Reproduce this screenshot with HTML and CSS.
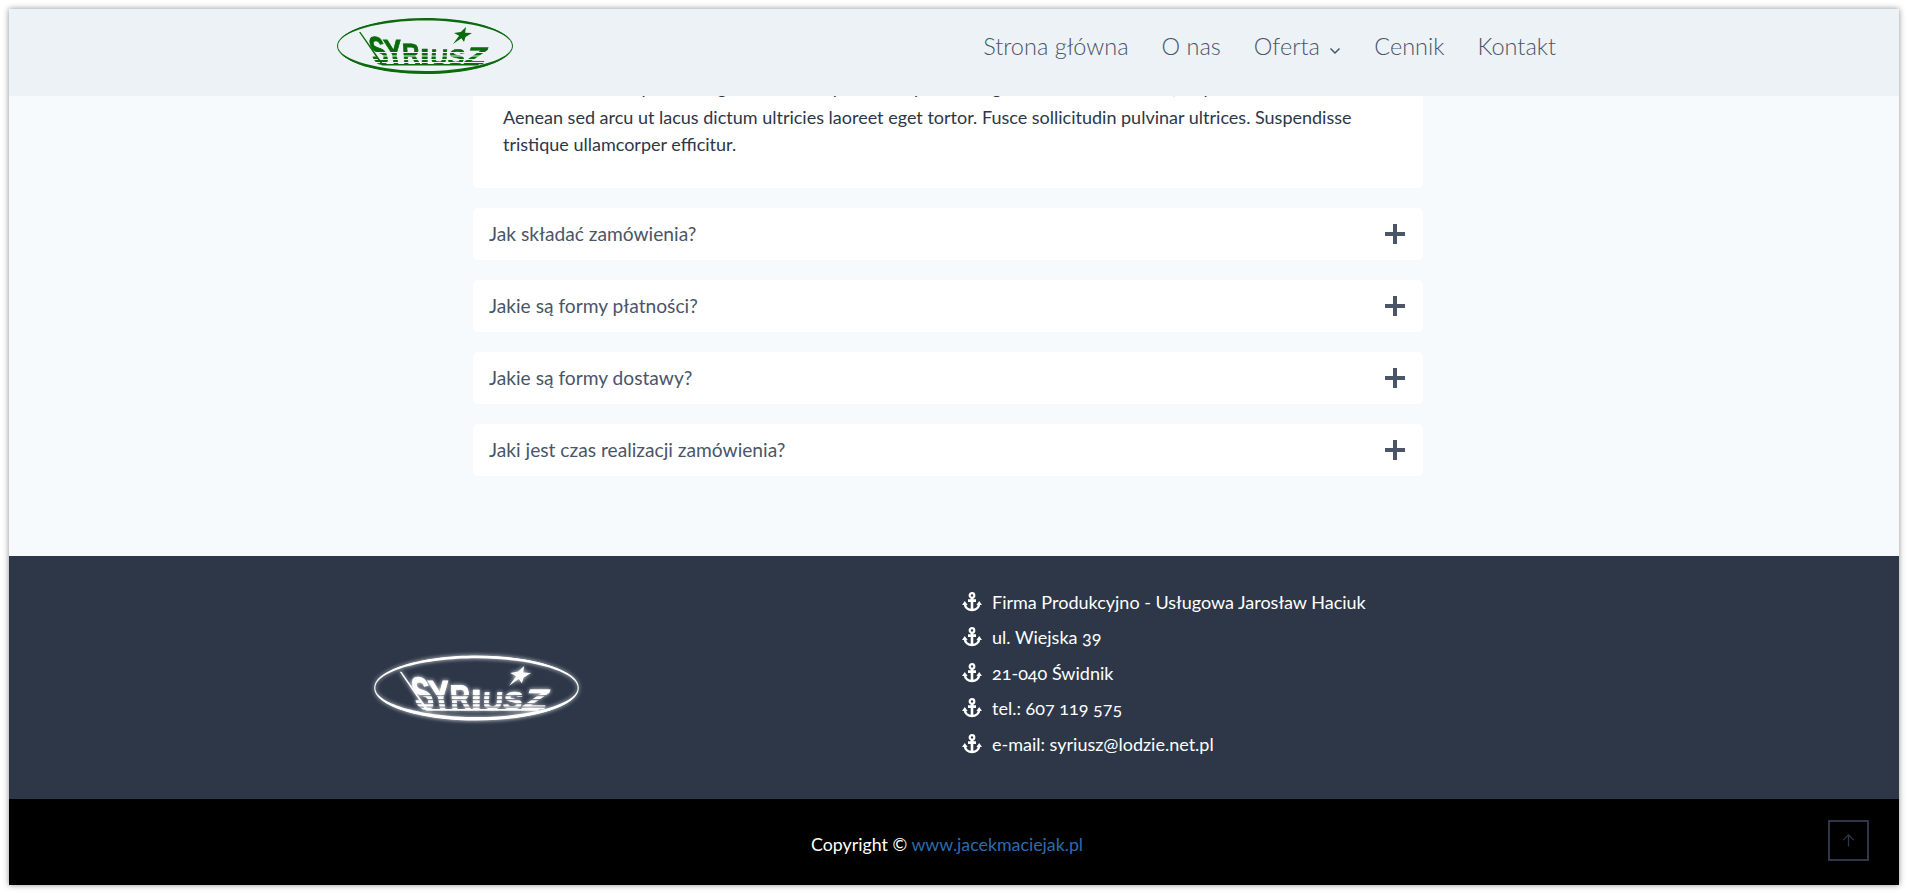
FILE: index.html
```html
<!DOCTYPE html>
<html lang="pl">
<head>
  <meta charset="UTF-8">
  <title>Syriusz</title>
  <link rel="stylesheet" href="styles.css">
</head>
<body>

  <svg class="defs">
    <symbol id="anchor" viewBox="0 0 20 20">
      <circle cx="10" cy="3.400" r="2.300" fill="none" stroke="currentColor" stroke-width="2.200"/>
      <path d="M10 5.500V18.500M6 8.600H14M2.800 11.500C3 15.800 6.400 18 10 18C13.600 18 17 15.800 17.200 11.500" fill="none" stroke="currentColor" stroke-width="2.600"/>
      <path d="M0 13L2.800 9L5.600 13ZM14.400 13L17.200 9L20 13Z" fill="currentColor"/>
    </symbol>
  </svg>

  <div class="window">
    <header class="header">
      <div class="header-inner">
        <svg class="logo" viewBox="0 0 178 58">
          <mask id="stripes-green" maskUnits="userSpaceOnUse" x="0" y="0" width="178" height="58">
            <rect width="178" height="58" fill="#fff"/>
            <path d="M20 35.500H160M20 39H160M20 42.500H160M20 45.500H160" stroke="#000" stroke-width="1"/>
          </mask>
          <ellipse cx="89" cy="29" rx="87.500" ry="27" fill="none" stroke="currentColor" stroke-width="1"/>
          <path d="M2 29C2 12 45 1 89 1C133 1 176 12 176 29C176 14 133 3.400 89 3.400C45 3.400 2 14 2 29Z" fill="currentColor"/>
          <path d="M2 29C2 46 45 57 89 57C133 57 176 46 176 29C176 43 133 54 89 54C45 54 2 43 2 29Z" fill="currentColor"/>
          <path d="M130 10L129.100 15.700L136 16L129.500 19.900L128 25L125.400 21.300L117 27L123.100 18.800L118 16L124.800 14.900Z" fill="currentColor"/>
          <path d="M23 15L46 48.500H142L143 47H47L24.500 15Z" fill="currentColor"/>
          <g class="logo-text" mask="url(#stripes-green)">
            <text transform="translate(38 47) skewX(15) scale(1.200 1.950)">S</text>
            <text transform="translate(51 47) skewX(10) scale(1.350 1.750)">Y</text>
            <text transform="translate(67 47) skewX(4) scale(1.200 1.470)">R</text>
            <text transform="translate(84 47) scale(1.700 1.150)">I</text>
            <text transform="translate(94 47) skewX(-4) scale(1.200 1.050)">U</text>
            <text transform="translate(111 47) skewX(-10) scale(1.250 1.050)">S</text>
            <text transform="translate(127 47) skewX(-20) scale(1.700 1.200)">Z</text>
          </g>
        </svg>
        <nav class="nav">
          <a href="#">Strona główna</a>
          <a href="#">O nas</a>
          <a href="#">Oferta
            <svg class="chevron" viewBox="0 0 12 8"><path d="M1.500 1.500L6 6L10.500 1.500" fill="none" stroke="currentColor" stroke-width="1.500"/></svg>
          </a>
          <a href="#">Cennik</a>
          <a href="#">Kontakt</a>
        </nav>
      </div>
    </header>

    <main class="faq">
      <div class="answer">
        <p><span class="under-header">Vestibulum dolor pretium eget massa nec purus semper eros eget nulla sit tellus enim, ac purus dolor sit.</span>
        Aenean sed arcu ut lacus dictum ultricies laoreet eget tortor. Fusce sollicitudin pulvinar ultrices. Suspendisse tristique ullamcorper efficitur.</p>
      </div>
      <div class="question"><span>Jak składać zamówienia?</span><i class="plus"></i></div>
      <div class="question"><span>Jakie są formy płatności?</span><i class="plus"></i></div>
      <div class="question"><span>Jakie są formy dostawy?</span><i class="plus"></i></div>
      <div class="question"><span>Jaki jest czas realizacji zamówienia?</span><i class="plus"></i></div>
    </main>

    <footer class="footer">
      <div class="footer-logo">
        <svg class="logo-white" viewBox="0 0 178 58">
          <mask id="stripes-white" maskUnits="userSpaceOnUse" x="0" y="0" width="178" height="58">
            <rect width="178" height="58" fill="#fff"/>
            <path d="M20 35.500H160M20 39H160M20 42.500H160M20 45.500H160" stroke="#000" stroke-width="1"/>
          </mask>
          <ellipse cx="89" cy="29" rx="87.500" ry="27" fill="none" stroke="currentColor" stroke-width="1"/>
          <path d="M2 29C2 12 45 1 89 1C133 1 176 12 176 29C176 14 133 3.400 89 3.400C45 3.400 2 14 2 29Z" fill="currentColor"/>
          <path d="M2 29C2 46 45 57 89 57C133 57 176 46 176 29C176 43 133 54 89 54C45 54 2 43 2 29Z" fill="currentColor"/>
          <path d="M130 10L129.100 15.700L136 16L129.500 19.900L128 25L125.400 21.300L117 27L123.100 18.800L118 16L124.800 14.900Z" fill="currentColor"/>
          <path d="M23 15L46 48.500H142L143 47H47L24.500 15Z" fill="currentColor"/>
          <g class="logo-text" mask="url(#stripes-white)">
            <text transform="translate(38 47) skewX(15) scale(1.200 1.950)">S</text>
            <text transform="translate(51 47) skewX(10) scale(1.350 1.750)">Y</text>
            <text transform="translate(67 47) skewX(4) scale(1.200 1.470)">R</text>
            <text transform="translate(84 47) scale(1.700 1.150)">I</text>
            <text transform="translate(94 47) skewX(-4) scale(1.200 1.050)">U</text>
            <text transform="translate(111 47) skewX(-10) scale(1.250 1.050)">S</text>
            <text transform="translate(127 47) skewX(-20) scale(1.700 1.200)">Z</text>
          </g>
        </svg>
      </div>
      <ul class="contact">
        <li><svg class="anchor"><use href="#anchor"/></svg>Firma Produkcyjno - Usługowa Jarosław Haciuk</li>
        <li><svg class="anchor"><use href="#anchor"/></svg>ul. Wiejska 39</li>
        <li><svg class="anchor"><use href="#anchor"/></svg>21-040 Świdnik</li>
        <li><svg class="anchor"><use href="#anchor"/></svg>tel.: 607 119 575</li>
        <li><svg class="anchor"><use href="#anchor"/></svg>e-mail: syriusz@lodzie.net.pl</li>
      </ul>
    </footer>

    <div class="copyright">
      <p>Copyright © <a href="#">www.jacekmaciejak.pl</a></p>
      <a class="to-top" href="#">
        <svg viewBox="0 0 16 16"><path d="M8 15.500V1M1.500 7.500L8 1L14.500 7.500" fill="none" stroke="currentColor" stroke-width="1.500"/></svg>
      </a>
    </div>
  </div>

</body>
</html>
```

FILE: styles.css
```css
* {
  box-sizing: border-box;
}

body {
  margin: 0;
  padding: 9px 9px 8px;
  background-color: #fff;
  font-family: Lato, "Open Sans", sans-serif;
  font-variant-numeric: oldstyle-nums;
}

.defs {
  display: none;
}

.window {
  position: relative;
  height: 876px;
  overflow: hidden;
  background-color: #f7fafc;
  box-shadow: 0 0 6px rgba(0,0,0,0.45);
}

.header {
  position: absolute;
  top: 0;
  left: 0;
  right: 0;
  z-index: 1;
  height: 87px;
  background-color: #edf2f7;
}

.header-inner {
  display: flex;
  align-items: center;
  justify-content: space-between;
  width: 1220px;
  height: 68px;
  margin-top: 3px;
  margin-left: 327px;
}

.logo {
  width: 178px;
  height: 58px;
  color: #0b6b0b;
}

.logo-text {
  font-family: "Liberation Sans", sans-serif;
  font-size: 20px;
  font-weight: 700;
  fill: currentColor;
  stroke: currentColor;
  stroke-width: 0.5px;
}

.nav {
  display: flex;
  gap: 33px;
}

.nav a {
  color: #4a5568;
  font-size: 23.500px;
  font-weight: 300;
  text-decoration: none;
}

.chevron {
  width: 12px;
  height: 8px;
  margin-left: 3px;
}

.faq {
  width: 950px;
  height: 547px;
  margin-left: 464px;
  padding-top: 48px;
}

.answer {
  height: 131px;
  margin-bottom: 20px;
  padding: 17px 30px 0;
  background-color: #fff;
  border-radius: 6px;
}

.answer p {
  margin: 0;
  color: #2d3748;
  font-size: 18px;
  line-height: 27px;
}

.under-header {
  display: block;
  margin-bottom: 3px;
  white-space: nowrap;
}

.question {
  display: flex;
  align-items: center;
  justify-content: space-between;
  height: 52px;
  margin-bottom: 20px;
  padding: 0 18px 2px 16px;
  background-color: #fff;
  border-radius: 6px;
  color: #4a5568;
  font-size: 19.200px;
}

.plus {
  position: relative;
  width: 20px;
  height: 20px;
  margin-top: 2px;
}

.plus::before,
.plus::after {
  content: "";
  position: absolute;
  background-color: #4a5568;
}

.plus::before {
  left: 0;
  top: 8px;
  width: 20px;
  height: 4px;
}

.plus::after {
  left: 8px;
  top: 0;
  width: 4px;
  height: 20px;
}

.footer {
  display: flex;
  height: 243px;
  background-color: #2d3748;
  color: #fff;
}

.footer-logo {
  display: flex;
  align-items: center;
  width: 953px;
  padding-top: 20px;
  padding-left: 364px;
}

.logo-white {
  width: 207px;
  height: 68px;
  color: #fff;
  filter: drop-shadow(0 0 2px rgba(255,255,255,0.9));
}

.contact {
  margin: 0;
  padding: 28px 0 0;
  list-style: none;
  font-size: 18px;
}

.contact li {
  display: flex;
  align-items: center;
  height: 35.500px;
}

.anchor {
  width: 20px;
  height: 20px;
  margin-right: 10px;
  color: #fff;
}

.copyright {
  position: relative;
  display: flex;
  align-items: center;
  height: 86px;
  padding-top: 4px;
  padding-left: 802px;
  background-color: #000;
  color: #fff;
  font-size: 17.800px;
}

.copyright p {
  margin: 0;
}

.copyright p a {
  color: #2b6cb0;
  text-decoration: none;
}

.to-top {
  position: absolute;
  right: 30px;
  top: 21px;
  display: flex;
  align-items: center;
  justify-content: center;
  width: 41px;
  height: 41px;
  border: 2px solid #2d3748;
  color: #2d3748;
}

.to-top svg {
  width: 13px;
  height: 13px;
}
```
